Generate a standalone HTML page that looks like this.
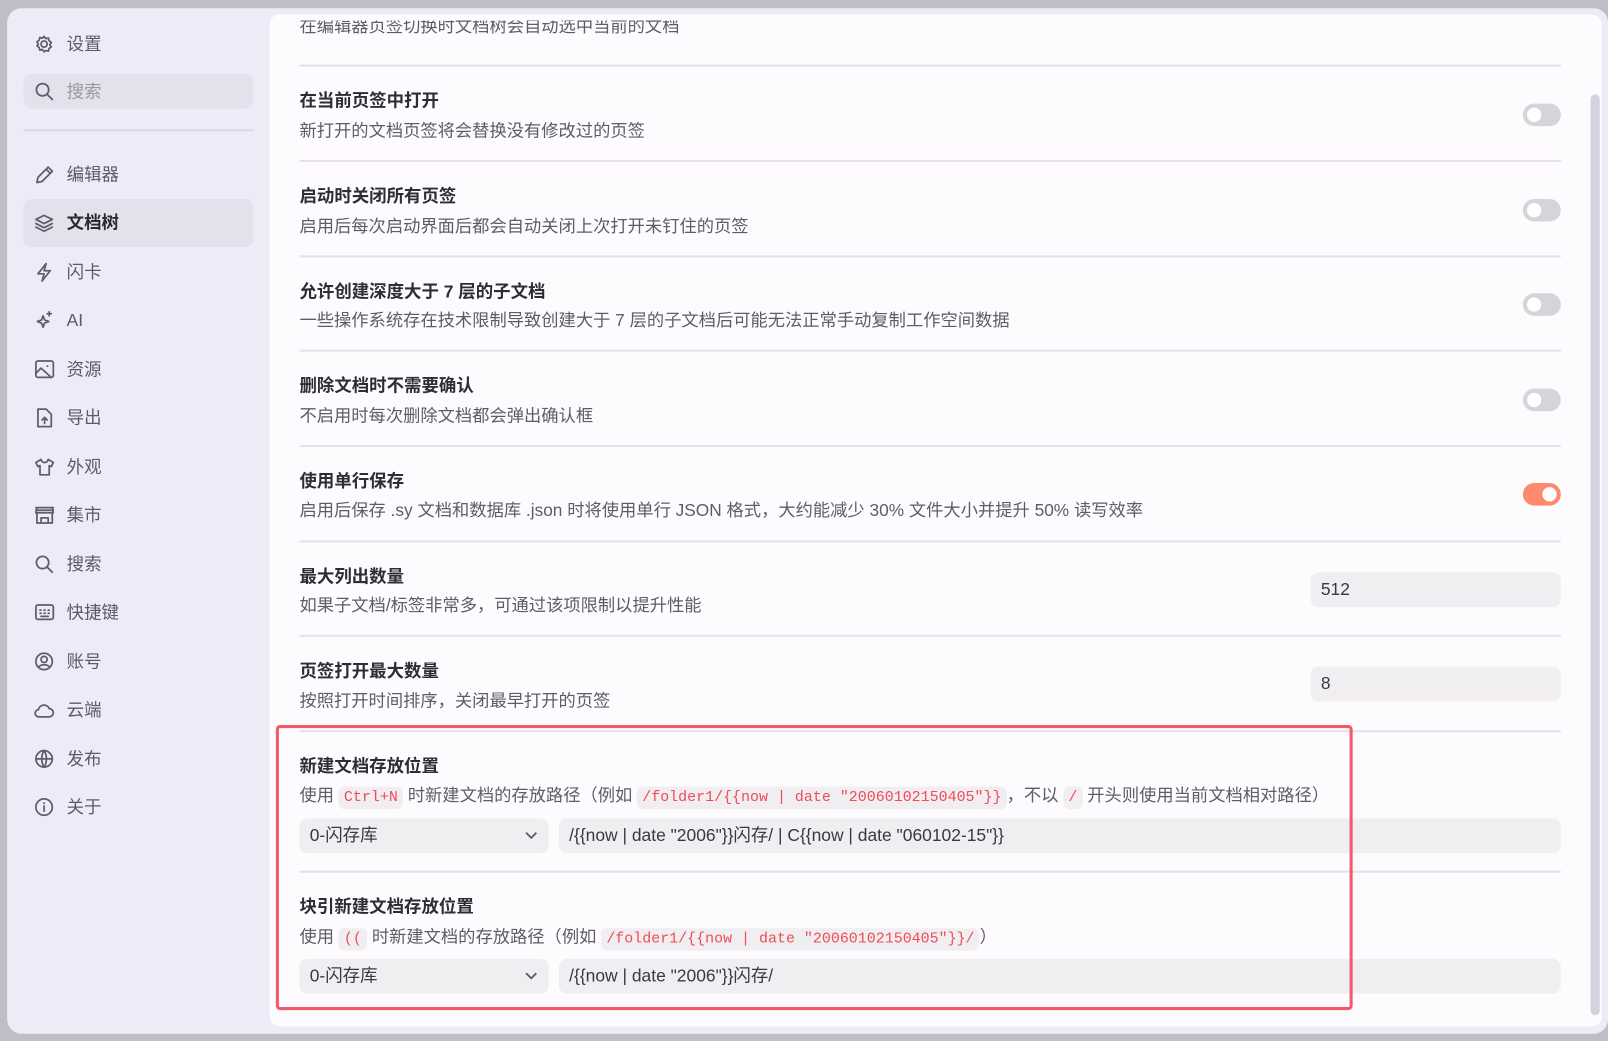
<!DOCTYPE html>
<html><head><meta charset="utf-8"><style>
*{margin:0;padding:0;box-sizing:border-box}
body{width:1608px;height:1041px;background:#bfbdc5;position:relative;overflow:hidden;font-family:"Liberation Sans","Noto Sans CJK SC",sans-serif;color:#3a3840}
#wrap{position:absolute;left:0;top:0;width:1568px;height:1015px;transform:scale(1.02551);transform-origin:0 0}
.win{position:absolute;left:7px;top:8px;width:1561px;height:1000px;background:#eeebf8;border-radius:14px}
.main{position:absolute;left:263px;top:14px;width:1299px;height:987px;background:#fefbff;border-radius:10px;overflow:hidden}
.a{position:absolute;white-space:nowrap}
.nav{position:absolute;left:23px;width:224px;height:47px;line-height:47px;font-size:17px;color:#5c5a66}
.nav span{position:absolute;left:42px}
.t{font-size:17px;font-weight:bold;color:#2f2d34;margin-top:-2px}
.d{font-size:16.85px;color:#5e5c66;margin-top:-2px}
.hr{position:absolute;left:292px;width:1230px;height:2px;background:#e4e0ee}
.tg{position:absolute;left:1485px;width:37px;height:22px;border-radius:11px;background:#d6d4d8}
.tg::after{content:"";position:absolute;left:4px;top:4px;width:14px;height:14px;border-radius:50%;background:#fff}
.tg.on{background:#fd8a6d}.tg.on::after{left:19px}
.in{position:absolute;background:#f1eef2;border-radius:8px;font-size:17px;color:#3a3840;line-height:34px;padding-left:10px;height:34px}
code{font-family:"Liberation Mono",monospace;font-size:14.6px;color:#ef4c56;background:#f1eef2;border-radius:6px;padding:3px 5px}
</style></head><body><div id="wrap">
<div class="win"></div>
<div class="a" style="left:23px;top:72px;width:224px;height:34px;background:#e4e0ec;border-radius:8px"></div>
<div class="a" style="left:23px;top:126px;width:224px;height:2px;background:#dcd8e4"></div>
<div class="a" style="left:23px;top:194px;width:224px;height:47px;background:#e4e0ec;border-radius:8px"></div>
<svg class="a" style="left:0;top:0" width="260" height="820" fill="none" stroke="#5f5d6b" stroke-width="1.7" stroke-linecap="round" stroke-linejoin="round">
<g transform="translate(34,34)"><circle cx="9" cy="9" r="3"/><path d="M9 1.5l1.6 2.2 2.6-.6.6 2.6 2.2 1.6-1.4 2.2 1.4 2.2-2.2 1.6-.6 2.6-2.6-.6L9 16.5l-1.6-2.2-2.6.6-.6-2.6-2.2-1.6L3.4 9 2 6.8l2.2-1.6.6-2.6 2.6.6z"/></g>
<g transform="translate(34,80)"><circle cx="7.5" cy="7.5" r="6"/><path d="M12 12l5 5"/></g>
<g transform="translate(34,161)"><path d="M2 17l1-5L13 2l4 4-10 10zM11 4l4 4"/></g>
<g transform="translate(34,208)"><path d="M9 2l8 4-8 4-8-4zM1 10l8 4 8-4M1 13.5l8 4 8-4"/></g>
<g transform="translate(34,256)"><path d="M11 1L3 11h6l-2 7 8-10H9z"/></g>
<g transform="translate(34,303)"><path d="M8 5l1.5 4 4 1.5-4 1.5L8 16l-1.5-4-4-1.5 4-1.5zM14 1v4M12 3h4"/></g>
<g transform="translate(34,351)"><rect x="1" y="1" width="17" height="16" rx="2"/><path d="M1 13l5-5 10 9M12 6h.5"/></g>
<g transform="translate(34,398)"><path d="M3 1h8l5 5v12H3zM9.5 15v-6M7 11.5l2.5-2.5 2.5 2.5"/></g>
<g transform="translate(34,446)"><path d="M6 2L1 5l2 4 2-1v9h9V8l2 1 2-4-5-3c-.5 2-2 3-3.5 3S6.5 4 6 2z"/></g>
<g transform="translate(34,493)"><path d="M1 2h17M2 2l-1 5h17l-1-5M2 7v10h15V7M6 17v-5h7v5M1 4.5h17"/></g>
<g transform="translate(34,541)"><circle cx="7.5" cy="7.5" r="6"/><path d="M12 12l5 5"/></g>
<g transform="translate(34,588)"><rect x="1" y="2" width="17" height="14" rx="2"/><path d="M5 7h1M9 7h1M13 7h1M5 10h1M9 10h1M13 10h1M6 13h7"/></g>
<g transform="translate(34,636)"><circle cx="9" cy="9" r="8"/><circle cx="9" cy="7" r="3"/><path d="M3.5 14.5c3-3 8-3 11 0"/></g>
<g transform="translate(34,683)"><path d="M4 16h10a4 4 0 000-8 5.5 5.5 0 00-10.5 1A3.5 3.5 0 004 16z"/></g>
<g transform="translate(34,731)"><circle cx="9" cy="9" r="8"/><path d="M1 9h16M9 1c-3 4-3 12 0 16M9 1c3 4 3 12 0 16"/></g>
<g transform="translate(34,778)"><circle cx="9" cy="9" r="8"/><path d="M9 8v5M9 5v.5"/></g>
</svg>
<div class="nav" style="top:20px"><span>设置</span></div>
<div class="nav" style="top:66px;color:#9a98a2"><span>搜索</span></div>
<div class="nav" style="top:147px"><span>编辑器</span></div>
<div class="nav" style="top:194px;color:#2a2830;font-weight:bold"><span>文档树</span></div>
<div class="nav" style="top:242px"><span>闪卡</span></div>
<div class="nav" style="top:289px"><span>AI</span></div>
<div class="nav" style="top:337px"><span>资源</span></div>
<div class="nav" style="top:384px"><span>导出</span></div>
<div class="nav" style="top:432px"><span>外观</span></div>
<div class="nav" style="top:479px"><span>集市</span></div>
<div class="nav" style="top:527px"><span>搜索</span></div>
<div class="nav" style="top:574px"><span>快捷键</span></div>
<div class="nav" style="top:622px"><span>账号</span></div>
<div class="nav" style="top:669px"><span>云端</span></div>
<div class="nav" style="top:717px"><span>发布</span></div>
<div class="nav" style="top:764px"><span>关于</span></div>

<div class="main"></div>
<div class="a" style="left:1551px;top:92px;width:9px;height:898px;background:#d5d2de;border-radius:5px"></div>
<div class="a d" style="left:292px;top:22px;line-height:24px;overflow:hidden;height:20px"><div style="margin-top:-6px">在编辑器页签切换时文档树会自动选中当前的文档</div></div>

<div class="hr" style="top:63px"></div>
<div class="a t" style="left:292px;top:86px">在当前页签中打开</div>
<div class="a d" style="left:292px;top:115px">新打开的文档页签将会替换没有修改过的页签</div>
<div class="tg" style="top:101px"></div>
<div class="hr" style="top:156px"></div>
<div class="a t" style="left:292px;top:179px">启动时关闭所有页签</div>
<div class="a d" style="left:292px;top:208px">启用后每次启动界面后都会自动关闭上次打开未钉住的页签</div>
<div class="tg" style="top:194px"></div>
<div class="hr" style="top:249px"></div>
<div class="a t" style="left:292px;top:272px">允许创建深度大于 7 层的子文档</div>
<div class="a d" style="left:292px;top:300px">一些操作系统存在技术限制导致创建大于 7 层的子文档后可能无法正常手动复制工作空间数据</div>
<div class="tg" style="top:286px"></div>
<div class="hr" style="top:341px"></div>
<div class="a t" style="left:292px;top:364px">删除文档时不需要确认</div>
<div class="a d" style="left:292px;top:393px">不启用时每次删除文档都会弹出确认框</div>
<div class="tg" style="top:379px"></div>
<div class="hr" style="top:434px"></div>
<div class="a t" style="left:292px;top:457px">使用单行保存</div>
<div class="a d" style="left:292px;top:485px">启用后保存 .sy 文档和数据库 .json 时将使用单行 JSON 格式，大约能减少 30% 文件大小并提升 50% 读写效率</div>
<div class="tg on" style="top:471px"></div>
<div class="hr" style="top:527px"></div>
<div class="a t" style="left:292px;top:550px">最大列出数量</div>
<div class="a d" style="left:292px;top:578px">如果子文档/标签非常多，可通过该项限制以提升性能</div>
<div class="in" style="left:1278px;top:558px;width:244px">512</div>
<div class="hr" style="top:619px"></div>
<div class="a t" style="left:292px;top:642px">页签打开最大数量</div>
<div class="a d" style="left:292px;top:671px">按照打开时间排序，关闭最早打开的页签</div>
<div class="in" style="left:1278px;top:650px;width:244px">8</div>
<div class="hr" style="top:712px"></div>
<div class="a t" style="left:292px;top:735px">新建文档存放位置</div>
<div class="a d" style="left:292px;top:763px">使用 <code>Ctrl+N</code> 时新建文档的存放路径（例如 <code>/folder1/{{now | date "20060102150405"}}</code>，不以 <code>/</code> 开头则使用当前文档相对路径）</div>
<div class="in" style="left:292px;top:798px;width:243px">0-闪存库<svg style="position:absolute;right:10px;top:12px" width="14" height="10" fill="none" stroke="#5f5d6b" stroke-width="1.8"><path d="M2 2l5 5 5-5"/></svg></div>
<div class="in" style="left:545px;top:798px;width:977px">/{{now | date "2006"}}闪存/ | C{{now | date "060102-15"}}</div>
<div class="hr" style="top:849px"></div>
<div class="a t" style="left:292px;top:872px">块引新建文档存放位置</div>
<div class="a d" style="left:292px;top:901px">使用 <code>((</code> 时新建文档的存放路径（例如 <code>/folder1/{{now | date "20060102150405"}}/</code>）</div>
<div class="in" style="left:292px;top:935px;width:243px">0-闪存库<svg style="position:absolute;right:10px;top:12px" width="14" height="10" fill="none" stroke="#5f5d6b" stroke-width="1.8"><path d="M2 2l5 5 5-5"/></svg></div>
<div class="in" style="left:545px;top:935px;width:977px">/{{now | date "2006"}}闪存/</div>
<div class="a" style="left:269px;top:707px;width:1050px;height:278px;border:3px solid #f25a6a;border-radius:4px"></div>
</div></body></html>
